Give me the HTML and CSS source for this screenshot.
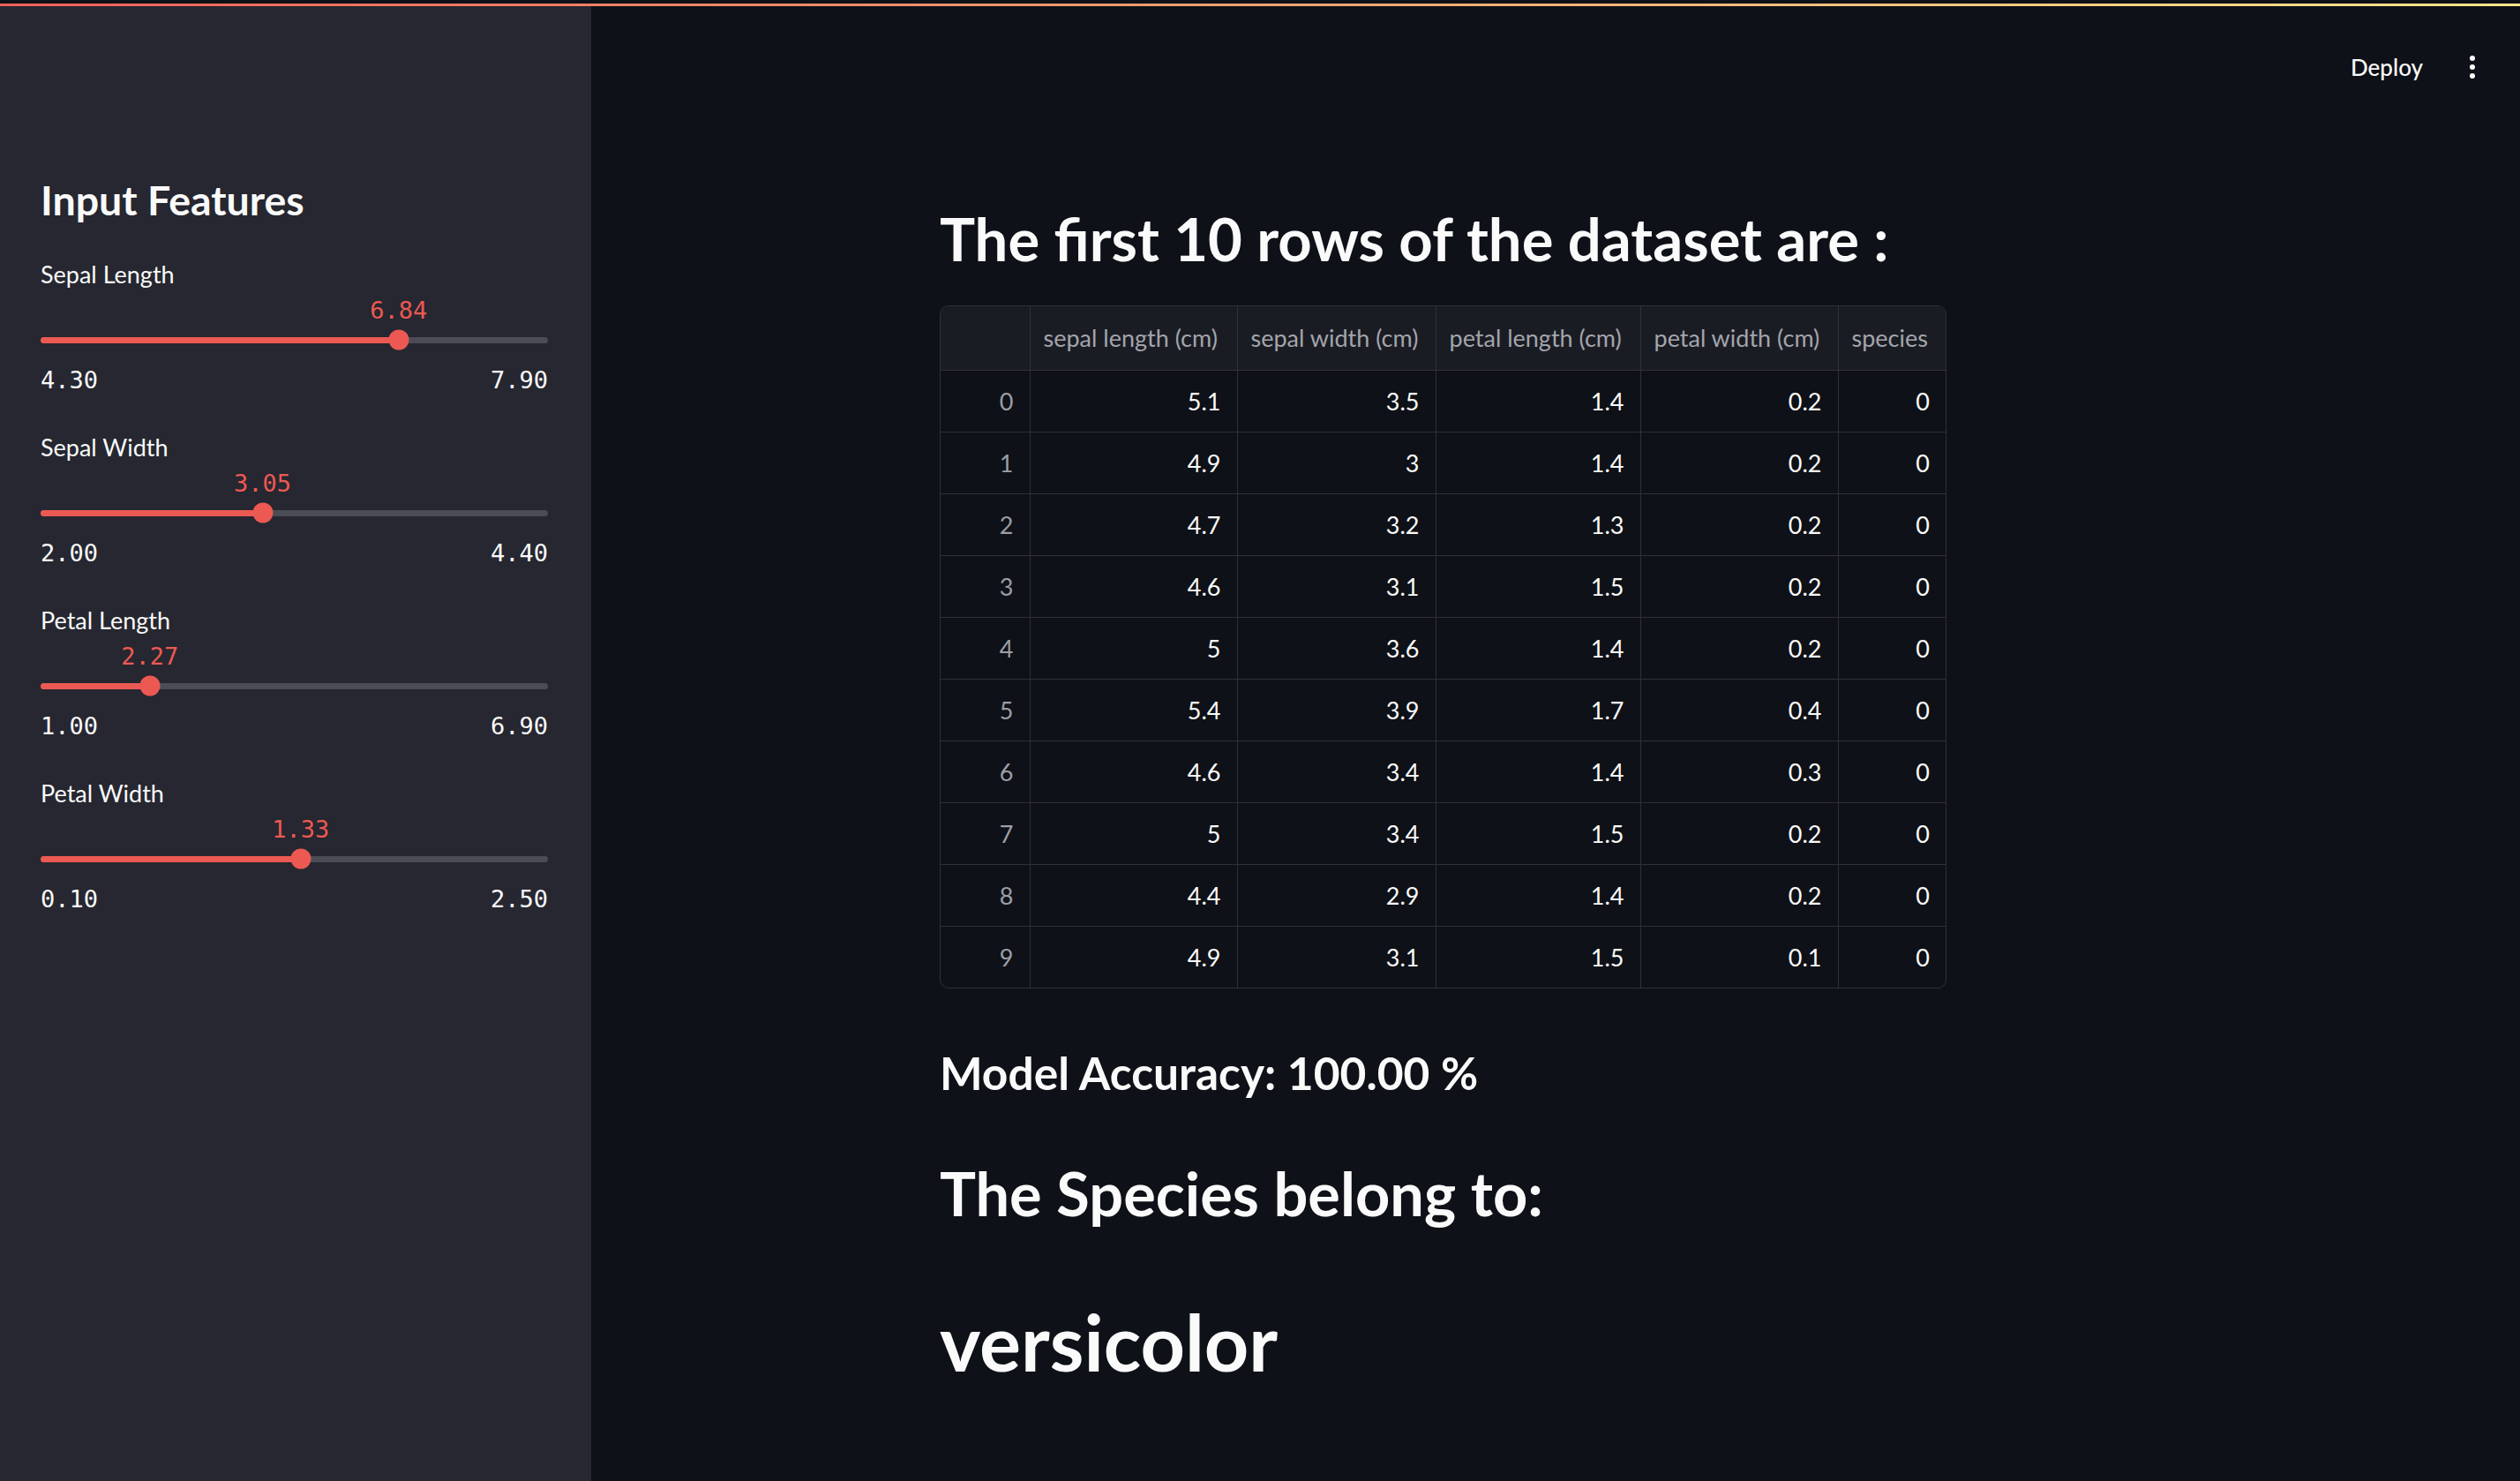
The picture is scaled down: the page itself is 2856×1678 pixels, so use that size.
FILE: index.html
```html
<!DOCTYPE html>
<html lang="en">
<head>
<meta charset="utf-8">
<title>Iris App</title>
<link rel="stylesheet" href="styles.css">
</head>
<body>
<div class="decoration"></div>
<div class="app">
  <aside class="sidebar">
    <h2 class="side-title">Input Features</h2>
    <div class="slider">
      <div class="slider-label">Sepal Length</div>
      <div class="slider-value-row"><span class="slider-value" style="left:70.56%">6.84</span></div>
      <div class="slider-track-zone">
        <div class="track"><div class="fill" style="width:70.56%"></div><div class="thumb" style="left:70.56%"></div></div>
      </div>
      <div class="ticks"><span>4.30</span><span>7.90</span></div>
    </div>
    <div class="slider">
      <div class="slider-label">Sepal Width</div>
      <div class="slider-value-row"><span class="slider-value" style="left:43.75%">3.05</span></div>
      <div class="slider-track-zone">
        <div class="track"><div class="fill" style="width:43.75%"></div><div class="thumb" style="left:43.75%"></div></div>
      </div>
      <div class="ticks"><span>2.00</span><span>4.40</span></div>
    </div>
    <div class="slider">
      <div class="slider-label">Petal Length</div>
      <div class="slider-value-row"><span class="slider-value" style="left:21.53%">2.27</span></div>
      <div class="slider-track-zone">
        <div class="track"><div class="fill" style="width:21.53%"></div><div class="thumb" style="left:21.53%"></div></div>
      </div>
      <div class="ticks"><span>1.00</span><span>6.90</span></div>
    </div>
    <div class="slider">
      <div class="slider-label">Petal Width</div>
      <div class="slider-value-row"><span class="slider-value" style="left:51.25%">1.33</span></div>
      <div class="slider-track-zone">
        <div class="track"><div class="fill" style="width:51.25%"></div><div class="thumb" style="left:51.25%"></div></div>
      </div>
      <div class="ticks"><span>0.10</span><span>2.50</span></div>
    </div>
  </aside>
  <main class="main">
    <header class="toolbar">
      <span class="deploy">Deploy</span>
      <svg class="kebab" width="24" height="30" viewBox="0 0 24 30"><circle cx="12" cy="5" r="3" fill="#fafafa"/><circle cx="12" cy="15" r="3" fill="#fafafa"/><circle cx="12" cy="25" r="3" fill="#fafafa"/></svg>
    </header>
    <section class="block">
      <h2 class="title">The first 10 rows of the dataset are :</h2>
      <div class="table-wrap">
        <table class="df">
          <colgroup>
            <col class="c0"><col class="c1"><col class="c2"><col class="c3"><col class="c4"><col class="c5">
          </colgroup>
          <thead>
            <tr><th></th><th>sepal length (cm)</th><th>sepal width (cm)</th><th>petal length (cm)</th><th>petal width (cm)</th><th>species</th></tr>
          </thead>
          <tbody>
            <tr><td class="idx">0</td><td>5.1</td><td>3.5</td><td>1.4</td><td>0.2</td><td>0</td></tr>
            <tr><td class="idx">1</td><td>4.9</td><td>3</td><td>1.4</td><td>0.2</td><td>0</td></tr>
            <tr><td class="idx">2</td><td>4.7</td><td>3.2</td><td>1.3</td><td>0.2</td><td>0</td></tr>
            <tr><td class="idx">3</td><td>4.6</td><td>3.1</td><td>1.5</td><td>0.2</td><td>0</td></tr>
            <tr><td class="idx">4</td><td>5</td><td>3.6</td><td>1.4</td><td>0.2</td><td>0</td></tr>
            <tr><td class="idx">5</td><td>5.4</td><td>3.9</td><td>1.7</td><td>0.4</td><td>0</td></tr>
            <tr><td class="idx">6</td><td>4.6</td><td>3.4</td><td>1.4</td><td>0.3</td><td>0</td></tr>
            <tr><td class="idx">7</td><td>5</td><td>3.4</td><td>1.5</td><td>0.2</td><td>0</td></tr>
            <tr><td class="idx">8</td><td>4.4</td><td>2.9</td><td>1.4</td><td>0.2</td><td>0</td></tr>
            <tr><td class="idx">9</td><td>4.9</td><td>3.1</td><td>1.5</td><td>0.1</td><td>0</td></tr>
          </tbody>
        </table>
      </div>
      <h3 class="accuracy">Model Accuracy: 100.00 %</h3>
      <h2 class="species-head">The Species belong to:</h2>
      <h1 class="species">versicolor</h1>
    </section>
  </main>
</div>
</body>
</html>
```

FILE: styles.css
```css
* { box-sizing: border-box; }
html, body {
  margin: 0;
  padding: 0;
  width: 2856px;
  height: 1678px;
  overflow: hidden;
  background: #0e1117;
  color: #fafafa;
  font-family: "Lato", "Noto Sans", sans-serif;
}
.decoration {
  position: absolute;
  top: 0;
  left: 0;
  right: 0;
  height: 7px;
  border-top: 4px solid #0e1117;
  background: linear-gradient(90deg, #f0605a, #fce68a);
  z-index: 5;
}
.app {
  display: flex;
  height: 1678px;
}
.sidebar {
  width: 670px;
  flex: none;
  background: #262730;
  padding: 196px 49px 0 46px;
  display: flex;
  flex-direction: column;
}
.side-title {
  margin: 0 0 37px 0;
  font-size: 46.5px;
  line-height: 60px;
  font-weight: 700;
}
.slider {
  display: flex;
  flex-direction: column;
  margin-bottom: 22px;
}
.slider-label {
  font-size: 27px;
  line-height: 36px;
  font-weight: 400;
}
.slider-value-row {
  position: relative;
  height: 46px;
}
.slider-value {
  position: absolute;
  top: 0;
  transform: translateX(-50%);
  line-height: 46px;
  font-family: "DejaVu Sans Mono", monospace;
  font-size: 27px;
  color: #ec5953;
}
.slider-track-zone {
  height: 20px;
  display: flex;
  align-items: center;
}
.track {
  position: relative;
  width: 100%;
  height: 7px;
  border-radius: 4px;
  background: #4a4c56;
}
.fill {
  height: 100%;
  border-radius: 4px;
  background: #ec5953;
}
.thumb {
  position: absolute;
  top: 50%;
  width: 23px;
  height: 23px;
  border-radius: 50%;
  background: #ec5953;
  transform: translate(-50%, -50%);
}
.ticks {
  display: flex;
  justify-content: space-between;
  font-family: "DejaVu Sans Mono", monospace;
  font-size: 27px;
  line-height: 72px;
  color: #fafafa;
}
.main {
  flex: 1;
  display: flex;
  flex-direction: column;
}
.toolbar {
  height: 152px;
  display: flex;
  justify-content: flex-end;
  align-items: center;
  padding-right: 42px;
  gap: 44px;
}
.deploy {
  font-size: 26px;
  font-weight: 500;
}
.kebab { display: block; }
.block {
  width: 1396px;
  margin: 0 auto;
  display: flex;
  flex-direction: column;
  align-items: flex-start;
}
.title {
  margin: 73px 0 31px 0;
  font-size: 67px;
  line-height: 90px;
  font-weight: 700;
}
.table-wrap {
  border: 1px solid #2f3038;
  border-radius: 10px;
  overflow: hidden;
}
.df {
  border-collapse: collapse;
  table-layout: fixed;
  width: 1139px;
  font-size: 27px;
}
.c0 { width: 101px; }
.c1 { width: 235px; }
.c2 { width: 225px; }
.c3 { width: 232px; }
.c4 { width: 224px; }
.c5 { width: 122px; }
.df th, .df td {
  border-right: 1px solid #2f3038;
  border-bottom: 1px solid #2f3038;
  padding: 0 18px 0 15px;
  white-space: nowrap;
}
.df th:last-child, .df td:last-child { border-right: none; }
.df tbody tr:last-child td { border-bottom: none; }
.df th {
  height: 72px;
  background: #1a1c24;
  color: #a3a5ab;
  font-weight: 400;
  text-align: left;
}
.df td {
  height: 70px;
  text-align: right;
  color: #fafafa;
}
.df td.idx { color: #9c9ea5; }
.accuracy {
  margin: 60px 0 0 0;
  font-size: 51.5px;
  line-height: 70px;
  font-weight: 700;
}
.species-head {
  margin: 57px 0 0 0;
  font-size: 68.5px;
  line-height: 90px;
  font-weight: 700;
}
.species {
  margin: 68px 0 0 0;
  font-size: 88px;
  line-height: 110px;
  font-weight: 700;
}
```
